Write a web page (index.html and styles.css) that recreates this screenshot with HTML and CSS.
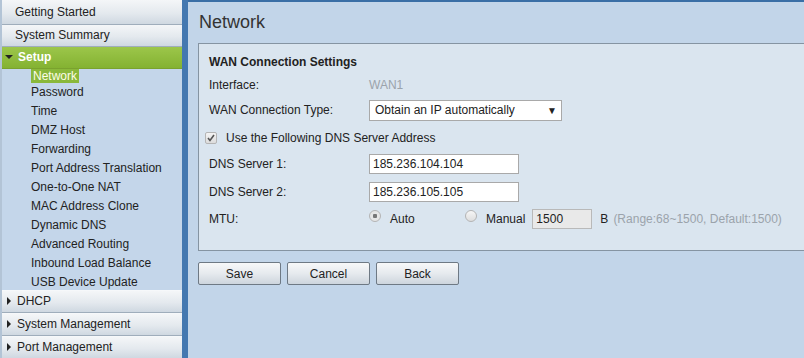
FILE: index.html
```html
<!DOCTYPE html>
<html lang="en">
<head>
    <meta charset="UTF-8">
    <title>Network</title>
    <link rel="stylesheet" href="styles.css">
</head>
<body>
    <div class="page">
        <div class="sidebar">
            <div class="nav-item first">Getting Started</div>
            <div class="nav-item">System Summary</div>
            <div class="nav-item open"><span class="arrow-down"></span>Setup</div>
            <ul class="sub-menu">
                <li><span class="current">Network</span></li>
                <li>Password</li>
                <li>Time</li>
                <li>DMZ Host</li>
                <li>Forwarding</li>
                <li>Port Address Translation</li>
                <li>One-to-One NAT</li>
                <li>MAC Address Clone</li>
                <li>Dynamic DNS</li>
                <li>Advanced Routing</li>
                <li>Inbound Load Balance</li>
                <li>USB Device Update</li>
            </ul>
            <div class="nav-item closed"><span class="arrow-right"></span>DHCP</div>
            <div class="nav-item closed"><span class="arrow-right"></span>System Management</div>
            <div class="nav-item closed"><span class="arrow-right"></span>Port Management</div>
        </div>
        <div class="main">
            <h1>Network</h1>
            <div class="panel">
                <h2>WAN Connection Settings</h2>
                <div class="row interface-row">
                    <span class="label">Interface:</span>
                    <span class="muted">WAN1</span>
                </div>
                <div class="row type-row">
                    <span class="label">WAN Connection Type:</span>
                    <div class="select">Obtain an IP automatically<span class="caret">&#9660;</span></div>
                </div>
                <div class="row check-row">
                    <span class="check">
                        <svg width="10" height="10" viewBox="0 0 10 10"><path d="M2 5 L4 7.5 L8 2" fill="none" stroke="#555" stroke-width="1.6"/></svg>
                    </span>
                    Use the Following DNS Server Address
                </div>
                <div class="row dns1-row">
                    <span class="label">DNS Server 1:</span>
                    <div class="text-input">185.236.104.104</div>
                </div>
                <div class="row dns2-row">
                    <span class="label">DNS Server 2:</span>
                    <div class="text-input">185.236.105.105</div>
                </div>
                <div class="row mtu-row">
                    <span class="label">MTU:</span>
                    <span class="radio checked"></span>
                    <span class="radio-text auto">Auto</span>
                    <span class="radio"></span>
                    <span class="radio-text">Manual</span>
                    <div class="text-input small">1500</div>
                    <span class="unit">B</span>
                    <span class="muted">(Range:68~1500, Default:1500)</span>
                </div>
            </div>
            <div class="buttons">
                <button>Save</button>
                <button>Cancel</button>
                <button>Back</button>
            </div>
        </div>
    </div>
</body>
</html>
```

FILE: styles.css
```css
body {
    margin: 0;
    font-family: "Liberation Sans", Arial, sans-serif;
    font-size: 12px;
    color: #222;
    background: #c2d5e9;
}
.page {
    display: flex;
    height: 358px;
    overflow: hidden;
}
.sidebar {
    width: 180px;
    flex-shrink: 0;
    background: #c4d6ea;
    border-left: 2px solid #b3c4d6;
    border-right: 6px solid #4478b0;
}
.nav-item {
    height: 21px;
    line-height: 21px;
    padding-left: 13px;
    font-size: 12px;
    color: #222;
    background: linear-gradient(#f4f6f8, #e4e9ee 55%, #cfd8e1);
    border-bottom: 1px solid #9fadbb;
}
.nav-item.first {
    height: 24px;
    line-height: 25px;
}
.nav-item.open {
    padding-left: 3px;
    color: #fff;
    font-weight: bold;
    background: linear-gradient(#9cc64a, #84b232);
    border-bottom: 1px solid #7aa22e;
}
.nav-item.closed {
    padding-left: 5px;
    border-top: 1px solid #f6f8fa;
}
.arrow-down {
    display: inline-block;
    width: 0;
    height: 0;
    border-left: 4px solid transparent;
    border-right: 4px solid transparent;
    border-top: 4px solid #222;
    margin-right: 5px;
    vertical-align: 2px;
}
.arrow-right {
    display: inline-block;
    width: 0;
    height: 0;
    border-top: 4px solid transparent;
    border-bottom: 4px solid transparent;
    border-left: 4px solid #222;
    margin-right: 6px;
    vertical-align: 0;
}
.sub-menu {
    list-style: none;
    margin: 0;
    padding: 0 0 0 29px;
}
.sub-menu li {
    height: 19px;
    line-height: 19px;
    font-size: 12px;
}
.sub-menu li:first-child {
    height: 14px;
    line-height: 14px;
}
.sub-menu li:last-child {
    height: 17px;
}
.current {
    display: inline-block;
    background: #8ab83a;
    color: #fdfde8;
    padding: 0 2px;
    line-height: 14px;
}
.main {
    flex: 1;
    border-top: 2px solid #3a6fa6;
    padding-left: 10px;
}
h1 {
    margin: 0;
    height: 41px;
    line-height: 40px;
    font-size: 18px;
    font-weight: normal;
    color: #333;
    padding-left: 1px;
}
.panel {
    background: #dae5ef;
    border: 1px solid #8594a2;
    border-right: none;
    height: 206px;
    padding-left: 10px;
}
h2 {
    margin: 0;
    font-size: 12px;
    font-weight: bold;
    padding-top: 11px;
    height: 20px;
}
.row {
    display: flex;
    align-items: center;
}
.interface-row {
    height: 20px;
}
.type-row {
    height: 30px;
}
.check-row {
    height: 26px;
}
.dns1-row {
    height: 26px;
}
.dns2-row {
    height: 30px;
}
.mtu-row {
    height: 24px;
}
.label {
    width: 160px;
}
.muted {
    color: #9ba3ab;
}
.select {
    width: 182px;
    height: 19px;
    line-height: 19px;
    background: #fff;
    border: 1px solid #a9a9a9;
    padding-left: 5px;
    display: flex;
    justify-content: space-between;
    padding-right: 4px;
}
.caret {
    font-size: 10px;
}
.check {
    width: 12px;
    height: 12px;
    box-sizing: border-box;
    border: 1px solid #b5b5b5;
    border-radius: 2px;
    background: linear-gradient(#f4f4f4, #dcdcdc);
    margin-left: -4px;
    margin-right: 9px;
    display: flex;
    align-items: center;
    justify-content: center;
}
.text-input {
    width: 145px;
    height: 18px;
    line-height: 18px;
    background: #fff;
    border: 1px solid #a9a9a9;
    padding-left: 3px;
}
.text-input.small {
    width: 55px;
    height: 18px;
    background: #e9e9e9;
    border-color: #b9b9b9;
    margin-right: 8px;
}
.radio {
    width: 12px;
    height: 12px;
    box-sizing: border-box;
    border: 1px solid #b4b4b4;
    border-radius: 50%;
    background: linear-gradient(#f6f6f6, #dedede);
    margin-left: 0;
    margin-right: 9px;
    position: relative;
    top: -3px;
}
.radio.checked {
    background: radial-gradient(circle, #777 0, #777 2px, #e6e6e6 2.5px);
}
.radio-text.auto {
    width: 68px;
}
.radio-text {
    margin-right: 7px;
}
.unit {
    margin-right: 5px;
}
.buttons {
    display: flex;
    gap: 6px;
    padding-top: 11px;
}
button {
    width: 83px;
    height: 23px;
    font-family: "Liberation Sans", Arial, sans-serif;
    font-size: 12px;
    color: #222;
    background: linear-gradient(#f7f8f9, #e6eaee 50%, #cdd5dd);
    border: 1px solid #6e7984;
    border-radius: 2px;
    padding: 0;
}
```
